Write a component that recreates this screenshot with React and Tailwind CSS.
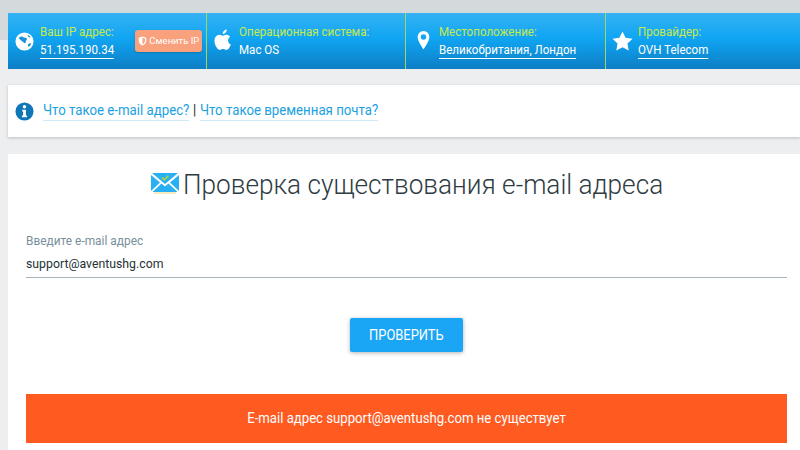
import React from "react";

const Apple = () => (
  <svg viewBox="0 0 24 24" className="w-[24px] h-[26px] shrink-0 -mt-[3px]" fill="#fff"><path d="M17.05 12.6c0-2.5 2-3.7 2.1-3.8-1.2-1.7-3-1.9-3.6-2-1.5-.2-3 .9-3.8.9-.8 0-2-.9-3.3-.9-1.7 0-3.3 1-4.1 2.5-1.8 3-.5 7.6 1.2 10 .8 1.2 1.8 2.6 3.2 2.5 1.3 0 1.8-.8 3.3-.8s2 .8 3.3.8c1.4 0 2.2-1.2 3.1-2.4 1-1.4 1.4-2.7 1.4-2.8-.1 0-2.8-1.1-2.8-4zM14.6 4.6c.7-.9 1.2-2 1.1-3.2-1 0-2.2.7-2.9 1.5-.6.7-1.2 1.9-1 3 1.1.1 2.2-.5 2.8-1.3z"/></svg>
);

const Globe = () => (
  <svg viewBox="0 0 20 20" className="w-[19px] h-[19px]"><circle cx="10" cy="10" r="9.5" fill="#fff"/><path d="M4 6c2-1.5 4-1.5 5-.5 1 .8 3 .3 3.500 1.500.4 1.300-1 1.500-1 3 0 1.300-1.500 2.500-2 1.500-.5-1-2-1.500-3-2.500C5.500 8 4.500 7.500 4 6zM14 12.500c1-.8 2.500-.8 3-.5-.4 1.500-1.300 2.800-2.500 3.500-.8-.8-1.200-2.200-.5-3zM13 3c1.500.5 2.800 1.500 3.500 3-1.200 0-2.800-.5-3.500-3z" fill="#1a93dc"/></svg>
);

const Pin = () => (
  <svg viewBox="0 0 14 22" className="w-[13px] h-[20px]"><path fillRule="evenodd" d="M7 0a6.500 6.500 0 0 0-6.500 6.500C.5 11 7 20 7 20s6.500-9 6.500-13.500A6.500 6.500 0 0 0 7 0zm0 9.500a3 3 0 1 1 0-6 3 3 0 0 1 0 6z" fill="#fff"/></svg>
);

const Star = () => (
  <svg viewBox="0 0 22 21" className="w-[21px] h-[20px]"><path d="M11 .5l3.200 6.600 7.300 1-5.300 5.100 1.300 7.300L11 17l-6.500 3.500 1.300-7.300L.5 8.100l7.300-1z" fill="#fff"/></svg>
);

const Shield = () => (
  <svg viewBox="0 0 10 12" className="w-[9px] h-[10px]"><path d="M5 .5l4.500 1.500v3.500c0 3-2 5-4.500 6-2.500-1-4.500-3-4.500-6V2z" fill="#fff"/><path d="M5 2v8c1.700-.8 3-2.200 3-4.500V3z" fill="#f9a07d"/></svg>
);

const Info = () => (
  <svg viewBox="0 0 20 20" className="w-[19px] h-[19px] shrink-0"><circle cx="10" cy="10" r="9.500" fill="#0f76b8"/><circle cx="10" cy="5" r="1.800" fill="#fff"/><path d="M7.500 8.200h4v6h1.200v1.800H7.300v-1.800h1.200v-4.200h-1z" fill="#fff"/></svg>
);

const Mail = () => (
  <svg viewBox="0 0 28 23" className="w-[28px] h-[23px]">
    <path d="M1 2h26L14 13z" fill="#29b0f3"/>
    <path d="M0 4l9 7.500L0 20zM28 4l-9 7.500 9 8.500z" fill="#29b0f3"/>
    <path d="M10.500 12.500L14 15.500l3.500-3L26.500 21H1.500z" fill="#29b0f3"/>
    <path d="M3 22h22" stroke="#f6e3a6" strokeWidth="1.500"/>
    <path d="M11 6.500l2.300 2.300 4-4" stroke="#a4d44a" strokeWidth="1.800" fill="none"/>
  </svg>
);

function Cell({ icon, label, value, link, extra, border }) {
  return (
    <div className={`w-[199px] shrink-0 h-full flex items-center relative ${border ? "border-r border-[#a5d65c]" : ""}`}>
      <div className="w-[32px] shrink-0 flex justify-center">{icon}</div>
      <div className="flex flex-col">
        <span className="text-[13px] origin-left scale-x-[0.89] leading-[15px] text-[#c6ea4e] whitespace-nowrap">{label}</span>
        <span className={`text-[13px] origin-left scale-x-[0.89] leading-[16px] mt-[3px] text-white whitespace-nowrap self-start ${link ? "border-b border-white" : ""}`}>{value}</span>
      </div>
      {extra}
    </div>
  );
}

export default function App() {
  return (
    <div
      className="w-[800px] h-[450px] overflow-hidden pl-[8px] pt-[13px] bg-[linear-gradient(to_bottom,#d4d9dc_0,#d4d9dc_40px,#eceef0_40px,#eceef0_100%)]"
      style={{ fontFamily: "Roboto, sans-serif" }}
    >
      <div className="h-[56px] w-[792px] flex bg-[linear-gradient(to_bottom,#35b2f4_0%,#10a5f2_45%,#0d7ec6_100%)]">
        <Cell
          border
          icon={<Globe />}
          label="Ваш IP адрес:"
          value="51.195.190.34"
          link
          extra={
            <div className="ml-[12px] h-[22px] px-[3px] flex items-center gap-[2px] bg-[#f9a07d] rounded-[3px] shadow-[0_1px_2px_rgba(0,0,0,0.2)] text-white text-[9.500px] whitespace-nowrap">
              <Shield /> Сменить IP
            </div>
          }
        />
        <div className="w-[200px] shrink-0 h-full">
          <Cell border icon={<Apple />} label="Операционная система:" value="Mac OS" />
        </div>
        <Cell border icon={<Pin />} label="Местоположение:" value="Великобритания, Лондон" link />
        <Cell icon={<Star />} label="Провайдер:" value="OVH Telecom" link />
      </div>

      <div className="mt-[16px] h-[52px] w-[792px] bg-white shadow-[0_1px_3px_rgba(0,0,0,0.2)] flex items-center pl-[7px] text-[14.500px]">
        <Info />
        <div className="ml-[9px] flex items-center origin-left scale-x-[0.913] whitespace-nowrap">
          <span className="text-[#1ba1e2] border-b border-[#cfe9f7] leading-[19px]">Что такое e-mail адрес?</span>
          <span className="mx-[4px] text-[#222]">|</span>
          <span className="text-[#1ba1e2] border-b border-[#cfe9f7] leading-[19px]">Что такое временная почта?</span>
        </div>
      </div>

      <div className="mt-[17px] w-[792px] h-[400px] bg-white pl-[18px] pr-[13px] flex flex-col">
        <div className="flex items-center justify-center h-[32px] mt-[15px]">
          <div className="mb-[6px] ml-[2px]"><Mail /></div>
          <h1 className="ml-[4px] -mr-[33px] origin-left scale-x-[0.935] text-[28px] font-light text-[#2f3b42] whitespace-nowrap">Проверка существования e-mail адреса</h1>
        </div>
        <label className="mt-[32px] origin-left scale-x-[0.915] text-[13px] leading-[15px] text-[#78909c] whitespace-nowrap">Введите e-mail адрес</label>
        <div className="mt-[6px] h-[24px] border-b border-[#a9b4ba] text-[13.500px] leading-[19px] text-[#263238]">
          <span className="inline-block origin-left scale-x-[0.91]">support@aventushg.com</span>
        </div>
        <button className="mt-[40px] self-center h-[34px] w-[113px] bg-[#1ba6f5] text-white text-[15px] rounded-[2px] shadow-[0_1px_4px_rgba(0,0,0,0.3)]">
          <span className="inline-block scale-x-[0.86]">ПРОВЕРИТЬ</span>
        </button>
        <div className="mt-[42px] h-[49px] bg-[#ff5a1f] text-white text-[14px] flex items-center justify-center">
          <span className="inline-block scale-x-[0.94]">E-mail адрес support@aventushg.com не существует</span>
        </div>
      </div>
    </div>
  );
}
